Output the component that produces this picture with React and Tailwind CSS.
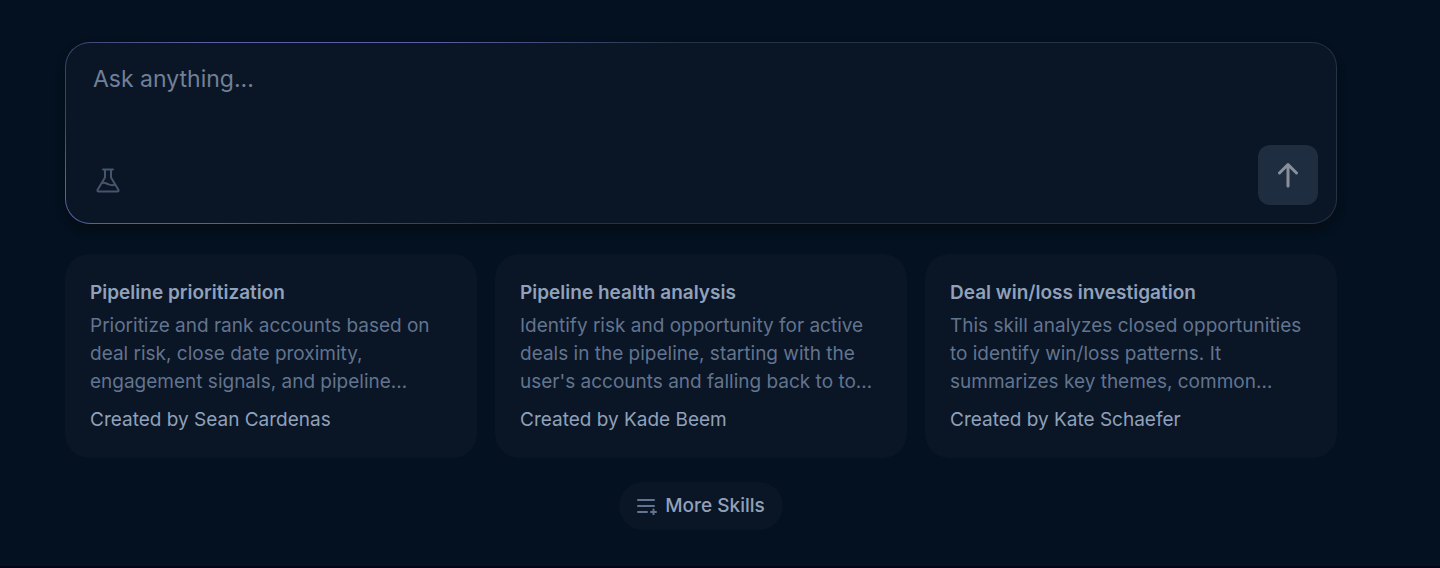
const skills = [
  {
    title: "Pipeline prioritization",
    description:
      "Prioritize and rank accounts based on deal risk, close date proximity, engagement signals, and pipeline…",
    author: "Sean Cardenas",
  },
  {
    title: "Pipeline health analysis",
    description:
      "Identify risk and opportunity for active deals in the pipeline, starting with the user's accounts and falling back to to…",
    author: "Kade Beem",
  },
  {
    title: "Deal win/loss investigation",
    description:
      "This skill analyzes closed opportunities to identify win/loss patterns. It summarizes key themes, common…",
    author: "Kate Schaefer",
  },
];

function FlaskIcon() {
  return (
    <svg
      width="24"
      height="26"
      viewBox="0 0 24 26"
      fill="none"
      stroke="currentColor"
      strokeWidth="2"
      strokeLinecap="round"
      strokeLinejoin="round"
      aria-hidden="true"
    >
      <path d="M7 2.5h10M9 2.5v8L1.6 22.8c-.5 1 0 1.7 1 1.7h18.8c1 0 1.5-.7 1-1.7L15 10.5v-8" />
      <path d="M6 16c2.5-.8 4 .3 6 1.2s4 1.3 6.5.6" />
    </svg>
  );
}

function ArrowUpIcon() {
  return (
    <svg
      width="20"
      height="26"
      viewBox="0 0 20 26"
      fill="none"
      stroke="currentColor"
      strokeWidth="3"
      strokeLinecap="round"
      strokeLinejoin="round"
      aria-hidden="true"
    >
      <path d="M10 24V2.5M1.5 11L10 2.5l8.500 8.500" />
    </svg>
  );
}

function ListPlusIcon() {
  return (
    <svg
      width="20"
      height="18"
      viewBox="0 0 20 18"
      fill="none"
      stroke="currentColor"
      strokeWidth="2"
      strokeLinecap="round"
      aria-hidden="true"
    >
      <path d="M1 3h16M1 9h16M1 15h9M14 15h5M16.5 12.5v5" />
    </svg>
  );
}

function Composer() {
  return (
    <div className="rounded-[25px] bg-[#243444] bg-[radial-gradient(ellipse_360px_110px_at_20%_0%,#5c60a4_30%,transparent_100%),radial-gradient(ellipse_460px_150px_at_0%_100%,#5064a4_30%,transparent_100%)] p-px shadow-[0_6px_6px_2px_#050e18]">
      <form
        className="flex flex-col rounded-3xl bg-[#0a1526] pt-5 pr-[18px] pb-[18px] pl-[27px]"
        onSubmit={(e) => e.preventDefault()}
      >
        <textarea
          aria-label="Ask anything"
          placeholder="Ask anything..."
          rows={2}
          className="h-[82px] w-full resize-none bg-transparent text-[23px] leading-8 text-slate-300 outline-none placeholder:text-[#718096]"
        />
        <div className="flex items-end justify-between">
          <button type="button" aria-label="Experiments" className="px-[3px] py-3 text-[#45556c]">
            <FlaskIcon />
          </button>
          <button
            type="submit"
            aria-label="Send"
            className="flex size-[60px] items-center justify-center rounded-xl bg-[#1e2d3f] text-[#8a909b]"
          >
            <ArrowUpIcon />
          </button>
        </div>
      </form>
    </div>
  );
}

function SkillCard({ title, description, author }) {
  return (
    <button
      type="button"
      className="flex flex-col rounded-3xl bg-[#0a1526] px-[25px] pt-[25px] pb-6 text-left text-[19px] leading-7"
    >
      <span className="font-semibold text-[#90a1b9]">{title}</span>
      <span className="mt-[5px] text-[#62748e]">{description}</span>
      <span className="mt-[10px] text-[#90a1b9]">Created by {author}</span>
    </button>
  );
}

export default function App() {
  return (
    <main className="min-h-screen border-b-2 border-[#02061a] bg-[#031120] pt-[42px] pr-[103px] pb-9 pl-[65px] font-[Inter,sans-serif]">
      <Composer />
      <div className="mt-[30px] grid grid-cols-3 gap-[18px]">
        {skills.map((skill) => (
          <SkillCard key={skill.title} {...skill} />
        ))}
      </div>
      <div className="mt-6 flex justify-center">
        <button
          type="button"
          className="flex h-12 items-center gap-2 rounded-full bg-[#0a1526] px-[18px] text-[19px] font-medium text-[#90a1b9]"
        >
          <span className="text-[#62748e]">
            <ListPlusIcon />
          </span>
          More Skills
        </button>
      </div>
    </main>
  );
}
